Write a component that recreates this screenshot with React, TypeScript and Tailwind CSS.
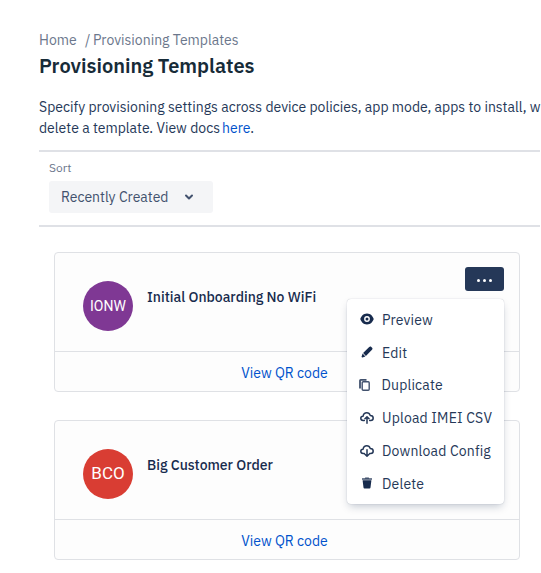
import React from "react";

function EyeIcon() {
  return (
    <svg width="14" height="12" viewBox="0 0 14 12">
      <path fillRule="evenodd" fill="#172b4d" d="M7 .5C3.200.5 1 3.600.3 6 1 8.400 3.200 11.500 7 11.500s6-3.100 6.700-5.500C13 3.600 10.800.5 7 .5zm0 2.600a2.900 2.900 0 1 1 0 5.800 2.900 2.900 0 0 1 0-5.800z" />
      <circle cx="7" cy="6" r="1.500" fill="#172b4d" />
    </svg>
  );
}

function PencilIcon() {
  return (
    <svg width="12" height="12" viewBox="0 0 12 12" fill="#172b4d">
      <path d="M8.200 1c.6-.6 1.500-.7 2.100-.1l.8.800c.6.600.5 1.500-.1 2.100L4.900 9.900 2.100 7.100z" />
      <path d="M1.600 7.600l2.800 2.800-2.900 1.100c-.6.200-1.200-.3-.9-.9z" />
    </svg>
  );
}

function CopyIcon() {
  return (
    <svg width="11" height="12" viewBox="0 0 11 12" fill="none" stroke="#42526e" strokeWidth="1.400">
      <rect x="3.200" y="2.700" width="7" height="8.600" rx="1" />
      <path d="M1 9.500V1.600Q1 .9 1.700.9H7.500" strokeWidth="1.800" />
    </svg>
  );
}

function CloudIcon({ up }: { up: boolean }) {
  return (
    <svg width="14" height="12" viewBox="0 0 14 12" fill="none" stroke="#253858" strokeWidth="1.500" strokeLinecap="round" strokeLinejoin="round">
      <path d="M4.300 8.500H3.200C1.700 8.500.8 7.500.8 6.300c0-1.300 1-2.100 2.300-2.100C3.400 2.200 4.900.8 6.800.8c1.700 0 2.900 1 3.400 2.600 1.800 0 3 1 3 2.600 0 1.500-1 2.500-2.500 2.500h-1" />
      {up ? <path d="M7 11.200V5.200M4.900 6.800L7 4.900l2.100 1.900" /> : <path d="M7 4.700V11M4.900 9.200L7 11.100l2.100-1.900" />}
    </svg>
  );
}

function TrashIcon() {
  return (
    <svg width="12" height="12" viewBox="0 0 12 12">
      <path fill="#42526e" d="M4.300.5h3.400l.5.700H11v1.600H1V1.200h2.800z" />
      <path fill="#172b4d" d="M1.600 3.300h8.800l-.9 7.300q-.1.900-1 .9h-5q-.9 0-1-.9z" />
    </svg>
  );
}

const items = [
  { label: "Preview", icon: <EyeIcon /> },
  { label: "Edit", icon: <PencilIcon /> },
  { label: "Duplicate", icon: <CopyIcon /> },
  { label: "Upload IMEI CSV", icon: <CloudIcon up /> },
  { label: "Download Config", icon: <CloudIcon up={false} /> },
  { label: "Delete", icon: <TrashIcon /> },
];

function ActionMenu() {
  return (
    <ul className="absolute right-0 top-8 z-10 h-[205px] w-[157px] rounded bg-white pt-[5px] shadow-[0_4px_8px_-2px_rgba(9,30,66,0.25),0_0_1px_rgba(9,30,66,0.31)]">
      {items.map((item) => (
        <li key={item.label} className="flex h-[32.8px] items-center pl-[11px] text-[14px] text-[#253858]">
          <span className={"flex w-[18px] -translate-y-px " + (item.label === "Duplicate" ? "mr-[5.5px] justify-start pl-[1px]" : "mr-[6px] justify-center")}>{item.icon}</span>
          <span className="whitespace-nowrap tracking-[0.17px]">{item.label}</span>
        </li>
      ))}
    </ul>
  );
}

function Card({ initials, avatar, title, menu }: { initials: string; avatar: string; title: string; menu?: boolean }) {
  return (
    <section className="h-[140px] w-[466px] rounded-[4px] border border-[#dfe1e5] bg-[#fdfdfd]">
      <div className="flex h-[98px] pl-7 pt-7">
        <div className={"flex size-[50px] shrink-0 items-center justify-center rounded-full font-[Roboto,sans-serif] text-white " + avatar}>{initials}</div>
        <h2 className="ml-[14px] mt-[6px] grow whitespace-nowrap text-[14px] font-medium leading-5 text-[#172b4d]">{title}</h2>
        {menu && (
          <div className="relative -mt-[14px] mr-[15px] h-6 w-[39px]">
            <button className="flex h-6 w-[39px] items-center justify-center gap-[3px] rounded-[3px] bg-[#253858] pt-[2px]">
              <i className="size-[3px] rounded-full bg-white" />
              <i className="size-[3px] rounded-full bg-white" />
              <i className="size-[3px] rounded-full bg-white" />
            </button>
            <ActionMenu />
          </div>
        )}
      </div>
      <div className="flex h-10 items-center justify-center border-t border-[#dfe1e5] pt-[3px] text-[14px] text-[#0052cc]">
        <a className="mr-[5px]">View QR code</a>
      </div>
    </section>
  );
}

export default function App() {
  return (
    <main className="h-[573px] w-[541px] overflow-hidden bg-white pl-[39px] pt-[30px] font-['IBM_Plex_Sans',Roboto,sans-serif] text-[14px] text-[#172b4d]">
      <nav className="flex h-5 items-center whitespace-nowrap text-[#6b778c]">
        <span className="w-[46px]">Home</span>
        <span className="w-[8px]">/</span>
        <span>Provisioning Templates</span>
      </nav>
      <h1 className="mt-[4px] h-6 whitespace-nowrap text-[20px] font-semibold leading-6 text-[#172b38]">Provisioning Templates</h1>
      <p className="mt-[19px] whitespace-nowrap leading-[21px] text-[#253858]">
        Specify provisioning settings across device policies, app mode, apps to install, w
        <br />
        delete a template. View docs
        <a className="ml-[2px] text-[#0052cc]">here</a>.
      </p>
      <div className="mr-px mt-[11px] h-[77px] border-y-2 border-[#dfe1e6] pl-[10px] pt-2">
        <label className="block h-4 text-[12px] leading-4 text-[#6b778c]">Sort</label>
        <div className="mt-[5px] flex h-8 w-[164px] items-center rounded-[3px] bg-[#f4f5f7] pl-3 text-[#42526e]">
          <span className="w-[123px] whitespace-nowrap">Recently Created</span>
          <svg width="10" height="7" viewBox="0 0 10 7" fill="none" stroke="#42526e" strokeWidth="2" strokeLinecap="round" strokeLinejoin="round" className="mt-px">
            <path d="M2 1.500l3 3 3-3" />
          </svg>
        </div>
      </div>
      <div className="ml-[15px] mt-[25px] flex flex-col gap-7">
        <Card initials="IONW" avatar="bg-[#7f3894] text-[14px]" title="Initial Onboarding No WiFi" menu />
        <Card initials="BCO" avatar="bg-[#d93d33] text-[17px]" title="Big Customer Order" />
      </div>
    </main>
  );
}
